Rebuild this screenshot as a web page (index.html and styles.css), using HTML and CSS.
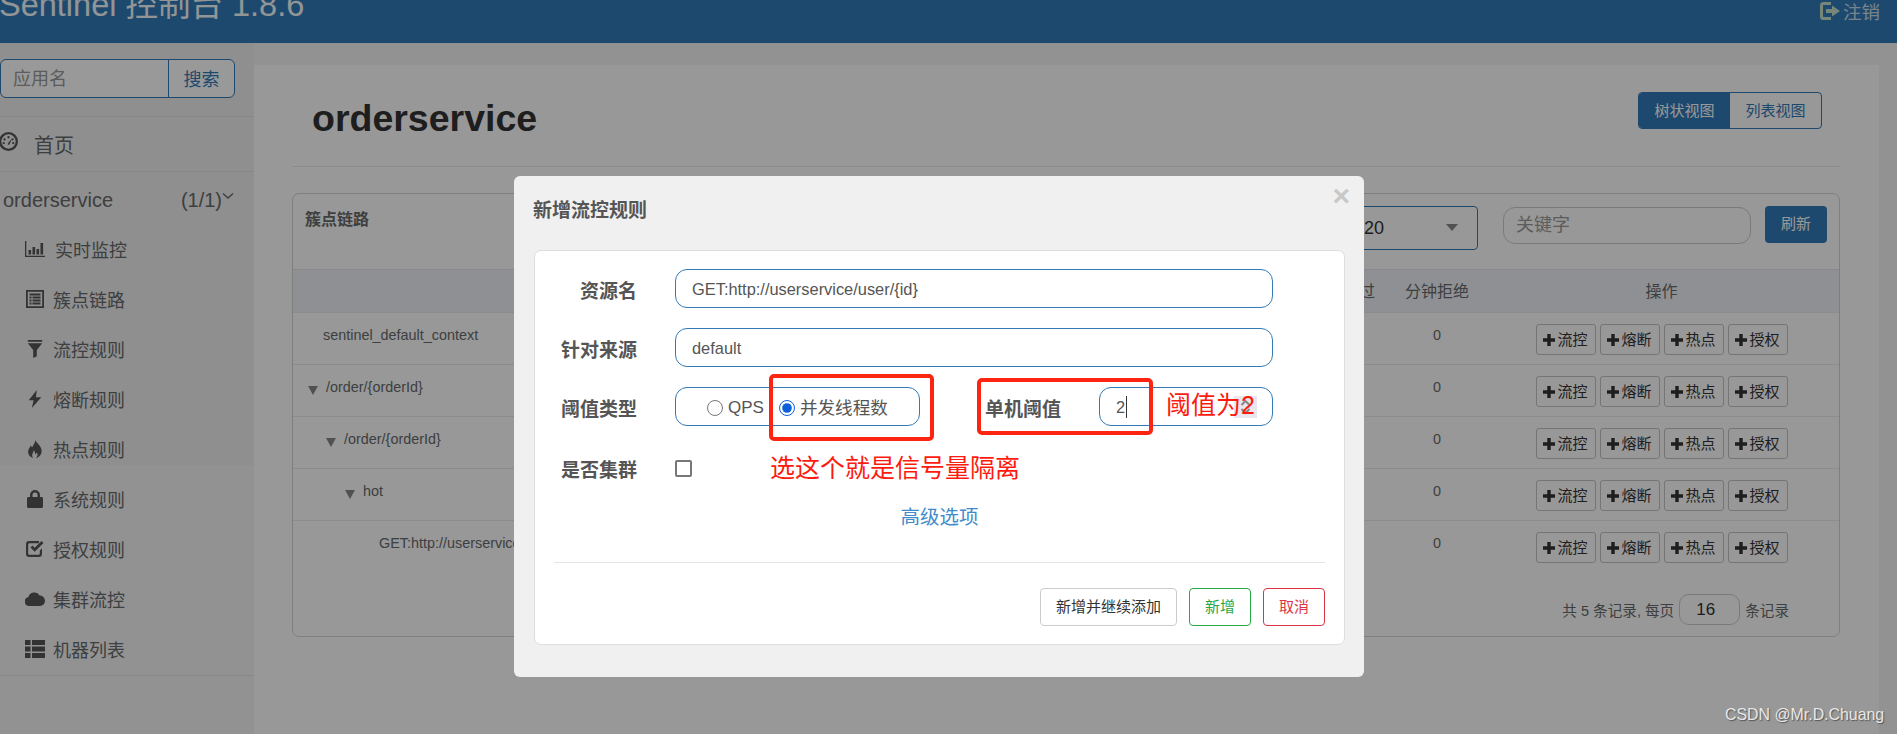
FILE: index.html
```html
<!DOCTYPE html>
<html lang="zh-CN">
<head>
  <meta charset="UTF-8" />
  <title>Sentinel 控制台</title>
  <link rel="stylesheet" href="styles.css">
</head>
<body>
  <svg class="sprites" width="0" height="0">
    <symbol id="i-dashboard" viewBox="0 0 18 18"><path fill-rule="evenodd" d="M9 0a9 9 0 1 0 0 18A9 9 0 0 0 9 0zm0 2.2a6.8 6.8 0 1 1 0 13.6A6.800 6.800 0 0 1 9 2.200z"/><circle cx="9" cy="5" r="1.100"/><circle cx="5.200" cy="7" r="1.100"/><circle cx="12.800" cy="7" r="1.100"/><circle cx="4.500" cy="10.500" r="1.100"/><circle cx="13.500" cy="10.500" r="1.100"/><path d="M8 11.500l2.800-4 .8.5-2 4.300z"/></symbol>
    <symbol id="i-stats" viewBox="0 0 20 16"><path d="M0 0h1.300v14.700H20V16H0z"/><path d="M3.500 9h2.600v4.500H3.500zM7.500 6h2.600v7.500H7.500zM11.500 8h2.600v5.500h-2.600zM15.500 2h2.600v11.500h-2.600z"/></symbol>
    <symbol id="i-list" viewBox="0 0 18 18"><path fill-rule="evenodd" d="M0 0h18v18H0zm1.800 1.800v14.400h14.400V1.800z"/><path d="M3.500 3.500h11v2h-11zM3.500 6.500h2v2h-2zM6.500 6.500h8v2h-8zM3.500 9.500h2v2h-2zM6.500 9.500h8v2h-8zM3.500 12.500h2v2h-2zM6.500 12.500h8v2h-8z"/></symbol>
    <symbol id="i-filter" viewBox="0 0 16 20"><path d="M0 0h16v2H0zM0 3.500h16L10 11v7l-4 2v-9z"/></symbol>
    <symbol id="i-flash" viewBox="0 0 14 20"><path d="M9 0L0 11.500h5.500L3.500 20 14 8H8z"/></symbol>
    <symbol id="i-fire" viewBox="0 0 16 20"><path fill-rule="evenodd" d="M8.500 0c1 3.500 6 6 6.800 11 .7 4.500-2.500 8-6.300 9 2-1.500 2.500-4 1-6-.4 1-1 1.500-2 1.800.3-1.800-.3-3.300-1.500-4.300.1 2-1.700 3.500-1.700 5.500 0 1.300.5 2.300 1.200 3C2.500 19 .3 16.300.3 13c0-3 2-4.500 3-7 .5 1 .8 1.500 1.700 2C6 5.500 8 3.500 8.500 0z"/></symbol>
    <symbol id="i-lock" viewBox="0 0 16 18"><path fill-rule="evenodd" d="M3 7V5a5 5 0 0 1 10 0v2h1.500c.8 0 1.500.7 1.500 1.500v8c0 .8-.7 1.500-1.500 1.500h-13C.7 18 0 17.300 0 16.500v-8C0 7.700.7 7 1.500 7zm2.500 0h5V5a2.500 2.500 0 0 0-5 0z"/></symbol>
    <symbol id="i-check" viewBox="0 0 18 18"><path d="M3.500 1H13v2.200H3.500c-.7 0-1.300.6-1.300 1.300v9c0 .7.600 1.300 1.300 1.300h9c.7 0 1.300-.6 1.300-1.300V10.500L16 8.300v5.400A3.300 3.300 0 0 1 12.700 17H3.300A3.300 3.300 0 0 1 0 13.700V4.300A3.300 3.300 0 0 1 3.500 1z"/><path d="M4.500 7.500l2-2 2.200 2.300L15.500 1l2 2-8.800 8.800z"/></symbol>
    <symbol id="i-cloud" viewBox="0 0 20 14"><path d="M4.500 14A4.500 4.500 0 0 1 3.400 5.100 6 6 0 0 1 14.500 3.500 5.300 5.300 0 0 1 20 8.800c0 3-2.300 5.200-5 5.200z"/></symbol>
    <symbol id="i-table" viewBox="0 0 20 18"><path d="M0 0h5.500v5H0zM7 0h13v5H7zM0 6.500h5.500v5H0zM7 6.500h13v5H7zM0 13h5.500v5H0zM7 13h13v5H7z"/></symbol>
    <symbol id="i-plus" viewBox="0 0 12 12"><path d="M4.300 0h3.400v4.300H12v3.400H7.700V12H4.300V7.700H0V4.300h4.300z"/></symbol>
    <symbol id="i-logout" viewBox="0 0 20 18"><path d="M3.500 0H11v3H4c-.6 0-1 .4-1 1v10c0 .6.400 1 1 1h7v3H3.500A3.500 3.500 0 0 1 0 14.500v-11A3.500 3.500 0 0 1 3.500 0z"/><path d="M12 3.500L20 9l-8 5.500V11H6V7h6z"/></symbol>
  </svg>

  <header class="topbar">
    <div class="brand">Sentinel 控制台 1.8.6</div>
    <div class="logout"><svg class="logout-icon"><use href="#i-logout"/></svg>注销</div>
  </header>

  <div class="layout">
    <aside class="sidebar">
      <div class="search">
        <div class="search-input">应用名</div>
        <div class="search-btn">搜索</div>
      </div>
      <div class="home"><svg class="home-icon"><use href="#i-dashboard"/></svg>首页</div>
      <div class="app-row">
        <span>orderservice</span>
        <span class="app-count">(1/1)<svg class="chevron" viewBox="0 0 12 8"><path d="M1 1.500l5 4.500 5-4.500" fill="none" stroke="currentColor" stroke-width="1.500"/></svg></span>
      </div>
      <ul class="menu">
        <li class="menu-item first"><svg class="menu-icon"><use href="#i-stats"/></svg>实时监控</li>
        <li class="menu-item"><svg class="menu-icon"><use href="#i-list"/></svg>簇点链路</li>
        <li class="menu-item"><svg class="menu-icon"><use href="#i-filter"/></svg>流控规则</li>
        <li class="menu-item"><svg class="menu-icon"><use href="#i-flash"/></svg>熔断规则</li>
        <li class="menu-item"><svg class="menu-icon"><use href="#i-fire"/></svg>热点规则</li>
        <li class="menu-item"><svg class="menu-icon"><use href="#i-lock"/></svg>系统规则</li>
        <li class="menu-item"><svg class="menu-icon"><use href="#i-check"/></svg>授权规则</li>
        <li class="menu-item"><svg class="menu-icon"><use href="#i-cloud"/></svg>集群流控</li>
        <li class="menu-item"><svg class="menu-icon"><use href="#i-table"/></svg>机器列表</li>
      </ul>
    </aside>

    <main class="content">
      <div class="title-row">
        <h1 class="page-title">orderservice</h1>
        <div class="view-switch">
          <span class="view-btn active">树状视图</span>
          <span class="view-btn">列表视图</span>
        </div>
      </div>

      <section class="panel">
        <div class="panel-head">
          <div class="panel-title">簇点链路</div>
          <div class="panel-tools">
            <div class="size-select">20<i class="caret-down"></i></div>
            <div class="keyword">关键字</div>
            <div class="refresh">刷新</div>
          </div>
        </div>

        <div class="row head-row">
          <div></div>
          <div class="num">分钟通过</div>
          <div class="num">分钟拒绝</div>
          <div class="num">操作</div>
        </div>

        <div class="row">
          <div class="res plain">sentinel_default_context</div>
          <div class="num">0</div>
          <div class="num">0</div>
          <div class="ops">
            <span class="op"><svg><use href="#i-plus"/></svg>流控</span>
            <span class="op"><svg><use href="#i-plus"/></svg>熔断</span>
            <span class="op"><svg><use href="#i-plus"/></svg>热点</span>
            <span class="op"><svg><use href="#i-plus"/></svg>授权</span>
          </div>
        </div>
        <div class="row">
          <div class="res lv1"><i class="tri"></i>/order/{orderId}</div>
          <div class="num">0</div>
          <div class="num">0</div>
          <div class="ops">
            <span class="op"><svg><use href="#i-plus"/></svg>流控</span>
            <span class="op"><svg><use href="#i-plus"/></svg>熔断</span>
            <span class="op"><svg><use href="#i-plus"/></svg>热点</span>
            <span class="op"><svg><use href="#i-plus"/></svg>授权</span>
          </div>
        </div>
        <div class="row">
          <div class="res lv2"><i class="tri"></i>/order/{orderId}</div>
          <div class="num">0</div>
          <div class="num">0</div>
          <div class="ops">
            <span class="op"><svg><use href="#i-plus"/></svg>流控</span>
            <span class="op"><svg><use href="#i-plus"/></svg>熔断</span>
            <span class="op"><svg><use href="#i-plus"/></svg>热点</span>
            <span class="op"><svg><use href="#i-plus"/></svg>授权</span>
          </div>
        </div>
        <div class="row">
          <div class="res lv3"><i class="tri"></i>hot</div>
          <div class="num">0</div>
          <div class="num">0</div>
          <div class="ops">
            <span class="op"><svg><use href="#i-plus"/></svg>流控</span>
            <span class="op"><svg><use href="#i-plus"/></svg>熔断</span>
            <span class="op"><svg><use href="#i-plus"/></svg>热点</span>
            <span class="op"><svg><use href="#i-plus"/></svg>授权</span>
          </div>
        </div>
        <div class="row last">
          <div class="res leaf">GET:http://userservice/user/{id}</div>
          <div class="num">0</div>
          <div class="num">0</div>
          <div class="ops">
            <span class="op"><svg><use href="#i-plus"/></svg>流控</span>
            <span class="op"><svg><use href="#i-plus"/></svg>熔断</span>
            <span class="op"><svg><use href="#i-plus"/></svg>热点</span>
            <span class="op"><svg><use href="#i-plus"/></svg>授权</span>
          </div>
        </div>

        <div class="pager">
          <span>共 5 条记录, 每页</span>
          <span class="page-size">16</span>
          <span>条记录</span>
        </div>
      </section>
    </main>
  </div>

  <div class="backdrop"></div>

  <div class="modal">
    <div class="modal-title">新增流控规则</div>
    <span class="modal-close">×</span>
    <div class="card">
      <div class="form-row">
        <label class="form-label">资源名</label>
        <div class="field wide">GET:http://userservice/user/{id}</div>
      </div>
      <div class="form-row">
        <label class="form-label">针对来源</label>
        <div class="field wide">default</div>
      </div>
      <div class="form-row">
        <label class="form-label">阈值类型</label>
        <div class="field radio-group">
          <label class="radio"><input type="radio" name="grade">QPS</label>
          <label class="radio"><input type="radio" name="grade" checked>并发线程数</label>
        </div>
        <label class="form-label inline">单机阈值</label>
        <div class="field count">2<i class="text-caret"></i></div>
      </div>
      <div class="form-row check-row">
        <label class="form-label">是否集群</label>
        <input class="cluster-check" type="checkbox">
      </div>
      <div class="advanced">高级选项</div>
      <div class="card-foot">
        <span class="foot-btn">新增并继续添加</span>
        <span class="foot-btn save">新增</span>
        <span class="foot-btn cancel">取消</span>
      </div>
    </div>
  </div>

  <!-- red marks drawn over the screenshot -->
  <div class="mark mark-radio"></div>
  <div class="mark mark-count"></div>
  <div class="note note-radio">选这个就是信号量隔离</div>
  <div class="note note-count"><svg class="spin" viewBox="0 0 10 16"><path d="M1 6l4-4 4 4M1 10l4 4 4-4" fill="none" stroke="currentColor" stroke-width="2"/></svg>阈值为2</div>
  <div class="watermark">CSDN @Mr.D.Chuang</div>
</body>
</html>
```

FILE: styles.css
```css
* {
  box-sizing: border-box;
}
html, body {
  height: 100%;
  overflow: hidden;
}
body {
  margin: 0;
  background: #f4f4f4;
  color: #676a6c;
  font-family: "Liberation Sans", "Noto Sans CJK SC", sans-serif;
  font-size: 14px;
  position: relative;
}
.sprites {
  position: absolute;
}
svg {
  fill: currentColor;
}

/* top bar */
.topbar {
  height: 43px;
  background: #337ab7;
  color: #fff;
  display: flex;
  justify-content: space-between;
  overflow: hidden;
}
.brand {
  font-size: 32.500px;
  line-height: 36px;
  margin: -13px 0 0 -1px;
  opacity: .95;
}
.logout {
  display: flex;
  align-items: center;
  height: 21px;
  margin-right: 17px;
  font-size: 18.500px;
  color: #c8dce8;
}
.logout-icon {
  width: 20px;
  height: 18px;
  margin-right: 3px;
  color: #c5e0c8;
}

.layout {
  display: flex;
  height: 691px;
}

/* left menu */
.sidebar {
  width: 254px;
  flex: none;
  background: linear-gradient(#eee 422px, #f4f4f4 422px);
}
.search {
  display: flex;
  width: 235px;
  height: 39px;
  margin-top: 16px;
  border: 1px solid #337ab7;
  border-radius: 6px;
  background: #fff;
  font-size: 18px;
}
.search-input {
  width: 168px;
  padding-left: 12px;
  line-height: 38px;
  color: #999;
  border-right: 1px solid #337ab7;
}
.search-btn {
  flex: 1;
  text-align: center;
  line-height: 40px;
  color: #337ab7;
}
.home {
  display: flex;
  align-items: center;
  height: 56px;
  margin-top: 18px;
  padding-top: 1px;
  border-top: 1px solid #e2e2e2;
  border-bottom: 1px solid #e2e2e2;
  font-size: 20px;
}
.home-icon {
  width: 19px;
  height: 19px;
  margin: -6px 16px 0 -1px;
  color: #555;
}
.app-row {
  display: flex;
  justify-content: space-between;
  height: 53px;
  padding: 14px 20px 0 3px;
  font-size: 20px;
  line-height: 28px;
}
.app-count {
  display: flex;
}
.chevron {
  width: 12px;
  height: 8px;
  margin-top: 6px;
}
.menu {
  list-style: none;
  margin: 0;
  padding: 0;
  border-bottom: 1px solid #e2e2e2;
}
.menu-item {
  display: flex;
  align-items: center;
  height: 50px;
  padding: 0 0 2px 25px;
  font-size: 18px;
}
.menu-icon {
  width: 20px;
  height: 18px;
  margin-right: 8px;
  color: #555;
}
.menu-item.first .menu-icon {
  margin-right: 10px;
}

/* main area */
.content {
  flex: none;
  width: 1625px;
  margin-top: 22px;
  padding: 0 39px 0 38px;
  background: #fdfdfd;
}
.title-row {
  display: flex;
  justify-content: space-between;
  align-items: flex-start;
  height: 102px;
  padding: 27px 18px 0 20px;
  border-bottom: 1px solid #e7eaec;
}
.page-title {
  margin: 0;
  font-size: 37.500px;
  line-height: 52px;
  color: #333;
}
.view-switch {
  display: flex;
  height: 37px;
  border: 1px solid #337ab7;
  border-radius: 4px;
  font-size: 15px;
  line-height: 35px;
  color: #337ab7;
  overflow: hidden;
}
.view-btn {
  width: 91px;
  text-align: center;
}
.view-btn.active {
  background: #337ab7;
  color: #fff;
}

.panel {
  height: 444px;
  margin-top: 26px;
  border: 1px solid #d4d4d4;
  border-radius: 7px;
}
.panel-head {
  display: flex;
  justify-content: space-between;
  height: 75px;
  padding: 12px 12px 0 12px;
}
.panel-title {
  font-size: 16px;
  font-weight: bold;
  line-height: 28px;
}
.panel-tools {
  display: flex;
  align-items: flex-start;
  gap: 14px;
}
.size-select {
  display: flex;
  justify-content: space-between;
  align-items: center;
  width: 211px;
  height: 44px;
  margin-right: 11px;
  padding: 0 19px 0 96px;
  border: 1px solid #337ab7;
  border-radius: 4px;
  font-size: 18px;
  color: #333;
}
.caret-down {
  width: 0;
  height: 0;
  border: solid transparent;
  border-width: 7px 6px 0;
  border-top-color: #888;
  margin-top: -2px;
}
.keyword {
  width: 248px;
  height: 37px;
  margin-top: 1px;
  padding-left: 12px;
  border: 1px solid #ccc;
  border-radius: 12px;
  font-size: 18px;
  line-height: 35px;
  color: #999;
}
.refresh {
  width: 62px;
  height: 37px;
  background: #337ab7;
  border-radius: 4px;
  color: #fff;
  font-size: 15px;
  text-align: center;
  line-height: 36px;
}

.row {
  display: grid;
  grid-template-columns: 1fr 94px 94px 355px;
  height: 52px;
  padding-top: 11px;
  font-size: 14.400px;
  line-height: 22px;
  border-bottom: 1px solid #e7eaec;
}
.row.last {
  border-bottom: 0;
}
.head-row {
  height: 44px;
  padding-top: 0;
  background: #eef1f5;
  border-top: 1px solid #e2e5e8;
  font-size: 16px;
  line-height: 43px;
  color: #676a6c;
}
.num {
  text-align: center;
}
.res {
  white-space: nowrap;
}
.plain { padding-left: 30px; }
.lv1 { padding-left: 15px; }
.lv2 { padding-left: 33px; }
.lv3 { padding-left: 52px; }
.leaf { padding-left: 86px; }
.tri {
  display: inline-block;
  width: 0;
  height: 0;
  margin: 0 8px 0 0;
  border: solid transparent;
  border-width: 9px 5.500px 0;
  border-top-color: #888;
  vertical-align: -3px;
}
.ops {
  display: flex;
  justify-content: center;
  gap: 4px;
}
.op {
  display: flex;
  align-items: center;
  width: 60px;
  height: 31px;
  padding-left: 6px;
  border: 1px solid #c4c4c4;
  border-radius: 3px;
  font-size: 15px;
  color: #333;
  background: #fdfdfd;
}
.op svg {
  width: 12px;
  height: 12px;
  margin-right: 3px;
}
.pager {
  display: flex;
  justify-content: flex-end;
  align-items: center;
  gap: 5px;
  margin-top: 21px;
  padding-right: 50px;
  font-size: 14.600px;
}
.page-size {
  width: 61px;
  height: 31px;
  padding-left: 16px;
  border: 1px solid #ccc;
  border-radius: 10px;
  font-size: 17px;
  line-height: 29px;
  color: #333;
}

/* dialog */
.backdrop {
  position: absolute;
  inset: 0;
  background: rgba(0, 0, 0, .4);
}
.modal {
  position: absolute;
  left: 514px;
  top: 176px;
  width: 850px;
  height: 501px;
  padding: 23px 19px 0 20px;
  background: #f0f0f0;
  border-radius: 6px;
  color: #555;
}
.modal-title {
  margin-left: -1px;
  font-size: 19px;
  font-weight: bold;
  line-height: 24px;
}
.modal-close {
  position: absolute;
  right: 14px;
  top: 3px;
  font-size: 30px;
  font-weight: bold;
  line-height: 34px;
  color: #c8c8c8;
}
.card {
  height: 395px;
  margin-top: 27px;
  padding: 18px 19px 0;
  background: #fff;
  border: 1px solid #ddd;
  border-radius: 7px;
}
.form-row {
  display: flex;
  align-items: center;
  height: 39px;
  margin-bottom: 20px;
}
.form-label {
  flex: none;
  width: 83px;
  margin-right: 38px;
  padding-top: 2px;
  text-align: right;
  font-size: 19px;
  font-weight: bold;
  color: #555;
  white-space: nowrap;
}
.field {
  height: 39px;
  padding-left: 16px;
  border: 1px solid #337ab7;
  border-radius: 12px;
  font-size: 16.400px;
  line-height: 38px;
  color: #555;
}
.wide {
  width: 598px;
}
.radio-group {
  display: flex;
  align-items: center;
  width: 245px;
  padding: 2px 0 0 31px;
  gap: 12px;
}
.radio {
  display: flex;
  align-items: center;
  gap: 5px;
  font-size: 17px;
  white-space: nowrap;
}
.radio + .radio {
  margin-left: 3px;
  font-size: 17.600px;
}
.radio input {
  width: 16px;
  height: 16px;
  margin: 0;
  accent-color: #0b5fd9;
}
.form-label.inline {
  width: 76px;
  margin: 0 38px 0 65px;
}
.count {
  width: 174px;
}
.text-caret {
  display: inline-block;
  width: 1px;
  height: 22px;
  margin-left: 1px;
  background: #333;
  vertical-align: -5px;
}
.check-row {
  padding-top: 3px;
  margin-bottom: 0;
}
.cluster-check {
  width: 17px;
  height: 17px;
  margin: 2px 0 0;
  appearance: none;
  border: 2px solid #777;
  border-radius: 2px;
  background: #fff;
}
.advanced {
  margin-top: 18px;
  text-align: center;
  font-size: 19.500px;
  line-height: 28px;
  color: #428bca;
}
.card-foot {
  display: flex;
  justify-content: flex-end;
  gap: 12px;
  margin-top: 31px;
  padding-top: 25px;
  border-top: 1px solid #e5e5e5;
}
.foot-btn {
  display: block;
  height: 38px;
  padding: 0 15px;
  border: 1px solid #ccc;
  border-radius: 4px;
  font-size: 15px;
  line-height: 36px;
  color: #333;
}
.foot-btn.save {
  width: 62px;
  padding: 0;
  text-align: center;
  border-color: #28a745;
  color: #28a745;
}
.foot-btn.cancel {
  width: 62px;
  padding: 0;
  text-align: center;
  border-color: #dc3545;
  color: #dc3545;
}

/* annotations on top of everything */
.mark {
  position: absolute;
  border: 4px solid #fd2412;
  border-radius: 5px;
}
.mark-radio {
  left: 769px;
  top: 374px;
  width: 165px;
  height: 67px;
}
.mark-count {
  left: 977px;
  top: 378px;
  width: 176px;
  height: 57px;
}
.note {
  position: absolute;
  color: #fd1a0e;
  font-size: 25px;
  line-height: 30px;
  white-space: nowrap;
}
.note-radio {
  left: 770px;
  top: 453px;
}
.note-count {
  left: 1166px;
  top: 390px;
  z-index: 0;
}
.spin {
  position: absolute;
  z-index: -1;
  left: 68px;
  top: 6px;
  width: 23px;
  height: 22px;
  padding: 3px 6px;
  background: #e8e6ee;
  color: #888;
}
.watermark {
  position: absolute;
  left: 1725px;
  top: 705px;
  font-size: 15.900px;
  line-height: 20px;
  color: #e8e8e8;
  text-shadow: 1px 1px 1px #555;
  white-space: nowrap;
}
```
